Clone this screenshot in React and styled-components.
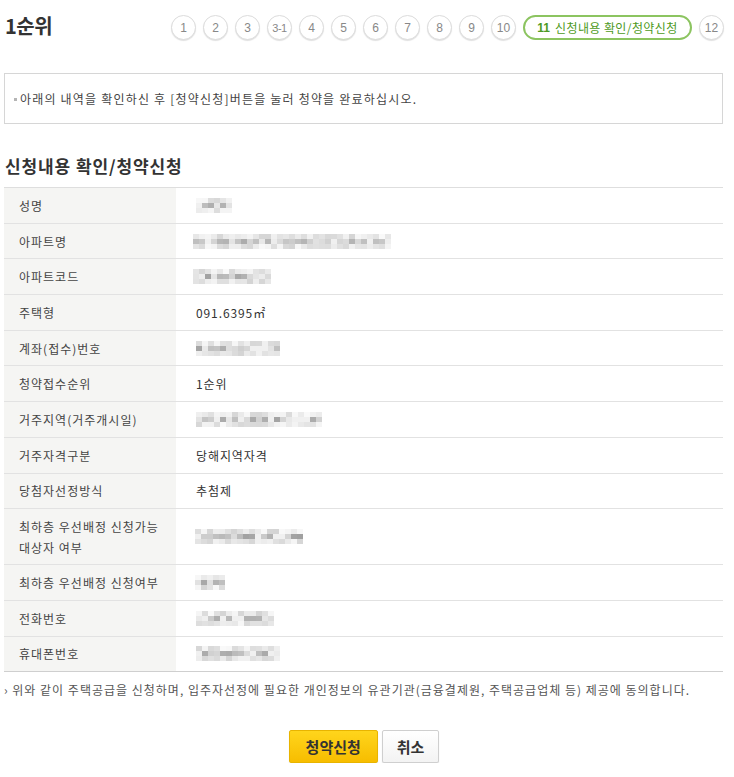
import React from "react";
import styled, { createGlobalStyle } from "styled-components";

const Global = createGlobalStyle`
  html, body { margin: 0; padding: 0; background: #fff; }
  body { font-family: "Noto Sans CJK KR", "Noto Sans", "Liberation Sans", sans-serif; color: #333; }
`;

const Page = styled.div`
  width: 719px;
  padding: 0 11px 0 4px;
`;

const Header = styled.div`
  display: flex;
  align-items: center;
  justify-content: space-between;
  padding-top: 15px;
  height: 25px;
`;

const Title = styled.h1`
  margin: 0;
  font-size: 20px;
  font-weight: 700;
  line-height: 25px;
  color: #333;
  letter-spacing: -0.5px;
  padding-left: 1px;
  margin-top: -4px;
`;

const Steps = styled.div`
  display: flex;
  gap: 7px;
  margin-right: -1px;
`;

const Step = styled.span`
  box-sizing: border-box;
  height: 25px;
  min-width: 25px;
  padding: ${(p) => (p.$active ? "0 12px" : "0")};
  width: ${(p) => (p.$active ? "169px" : "25px")};
  border-radius: 13px;
  border: ${(p) => (p.$active ? "2px solid #8cc460" : "1px solid #dcdcdc")};
  box-shadow: ${(p) => (p.$active ? "none" : "0 1px 1px rgba(0,0,0,0.12)")};
  background: #fff;
  display: flex;
  align-items: center;
  justify-content: center;
  font-family: "Liberation Sans", "Noto Sans CJK KR", sans-serif;
  font-size: ${(p) => (p.$small ? "11px" : "12px")};
  letter-spacing: ${(p) => (p.$small ? "-0.5px" : "0")};
  color: ${(p) => (p.$active ? "#4e9a23" : "#888")};
  white-space: nowrap;
`;

const StepNum = styled.b`
  font-weight: 700;
  margin-right: 5px;
`;

const StepLabel = styled.span`
  font-family: "Noto Sans CJK KR", sans-serif;
  font-size: 12px;
  letter-spacing: 0.4px;
`;

const InfoBox = styled.div`
  margin-top: 33px;
  height: 49px;
  border: 1px solid #d6d6d6;
  display: flex;
  align-items: center;
  padding-left: 9px;
  font-size: 12px;
  color: #444;
  letter-spacing: 1.2px;
`;

const Bullet = styled.span`
  width: 3px;
  height: 3px;
  background: #b5b5b5;
  margin-right: 3px;
  margin-top: 1px;
`;

const SectionTitle = styled.h2`
  margin: 31px 0 0 1px;
  font-size: 17px;
  font-weight: 700;
  line-height: 22px;
  color: #333;
  letter-spacing: 0.9px;
`;

const Table = styled.table`
  margin-top: 10px;
  width: 719px;
  border-collapse: collapse;
  border-top: 1px solid #dedede;
  border-bottom: 1px solid #cfcfcf;
`;

const Row = styled.tr`
  height: ${(p) => (p.$tall ? "56px" : "35.7px")};
  border-bottom: 1px solid #e2e2e2;
  &:last-child { border-bottom: none; }
`;

const Label = styled.th`
  width: 172px;
  box-sizing: border-box;
  background: #f5f5f3;
  text-align: left;
  font-weight: 400;
  font-size: 12px;
  line-height: 21px;
  color: #444;
  padding: 0 6px 0 15px;
  letter-spacing: 1px;
`;

const Value = styled.td`
  font-size: 12px;
  color: #333;
  padding: 0 0 0 20px;
  letter-spacing: 0.9px;
`;

const BlurSvg = styled.svg`
  display: block;
  margin-left: ${(p) => p.$offset || 0}px;
`;

const Notice = styled.p`
  margin: 10px 0 0 0;
  font-size: 12px;
  color: #555;
  letter-spacing: 1px;
  line-height: 16px;
  white-space: nowrap;
`;

const Buttons = styled.div`
  display: flex;
  justify-content: center;
  gap: 4px;
  margin-top: 32px;
  padding-left: 1px;
`;

const Button = styled.button`
  box-sizing: border-box;
  height: 33px;
  padding: 0 ${(p) => (p.$primary ? "16px" : "14px")};
  font-family: "Noto Sans CJK KR", sans-serif;
  font-size: 15px;
  font-weight: 700;
  color: #333;
  border-radius: 2px;
  border: 1px solid ${(p) => (p.$primary ? "#e8b400" : "#cfcfcf")};
  background: ${(p) =>
    p.$primary
      ? "linear-gradient(#ffd51c, #f7bd00)"
      : "linear-gradient(#ffffff, #f3f3f3)"};
  box-shadow: 0 1px 1px rgba(0,0,0,0.15);
  cursor: pointer;
`;

function hash(n) {
  const x = Math.sin(n * 12.9898) * 43758.5453;
  return x - Math.floor(x);
}

function Blur({ w, seed, offset }) {
  const cell = 6;
  const cols = Math.ceil(w / cell);
  const rects = [];
  for (let r = 0; r < 3; r++) {
    for (let c = 0; c < cols; c++) {
      const h = hash(seed * 101 + r * 37 + c * 7.3);
      let g;
      if (r === 1) g = 160 + Math.floor(h * 80);
      else g = 212 + Math.floor(h * 38);
      if (hash(seed + c * 3.1) > 0.85 && r === 1) g = 240;
      rects.push(
        <rect key={r + "-" + c} x={c * cell} y={r * 5} width={cell} height={5} fill={`rgb(${g},${g},${g})`} />
      );
    }
  }
  return (
    <BlurSvg $offset={offset} width={cols * cell} height={15} viewBox={`0 0 ${cols * cell} 15`}>
      {rects}
    </BlurSvg>
  );
}

const rows = [
  { label: "성명", blur: { w: 36, seed: 1, offset: 0 } },
  { label: "아파트명", blur: { w: 196, seed: 2, offset: -3 } },
  { label: "아파트코드", blur: { w: 78, seed: 3, offset: -3 } },
  { label: "주택형", text: "091.6395㎡" },
  { label: "계좌(접수)번호", blur: { w: 80, seed: 5, offset: 0 } },
  { label: "청약접수순위", text: "1순위" },
  { label: "거주지역(거주개시일)", blur: { w: 126, seed: 7, offset: 0 } },
  { label: "거주자격구분", text: "당해지역자격" },
  { label: "당첨자선정방식", text: "추첨제" },
  { label: "최하층 우선배정 신청가능\n대상자 여부", blur: { w: 108, seed: 10, offset: -1 }, tall: true },
  { label: "최하층 우선배정 신청여부", blur: { w: 28, seed: 11, offset: -1 } },
  { label: "전화번호", blur: { w: 78, seed: 12, offset: 0 } },
  { label: "휴대폰번호", blur: { w: 84, seed: 13, offset: 0 } },
];

const steps = ["1", "2", "3", "3-1", "4", "5", "6", "7", "8", "9", "10"];

export default function App() {
  return (
    <Page>
      <Global />
      <Header>
        <Title>1순위</Title>
        <Steps>
          {steps.map((s) => (
            <Step key={s} $small={s === "3-1"}>{s}</Step>
          ))}
          <Step $active>
            <StepNum>11</StepNum>
            <StepLabel>신청내용 확인/청약신청</StepLabel>
          </Step>
          <Step>12</Step>
        </Steps>
      </Header>
      <InfoBox>
        <Bullet />
        아래의 내역을 확인하신 후 [청약신청]버튼을 눌러 청약을 완료하십시오.
      </InfoBox>
      <SectionTitle>신청내용 확인/청약신청</SectionTitle>
      <Table>
        <tbody>
          {rows.map((r) => (
            <Row key={r.label} $tall={r.tall}>
              <Label>
                {r.label.split("\n").map((l, i) => (
                  <React.Fragment key={i}>
                    {i > 0 && <br />}
                    {l}
                  </React.Fragment>
                ))}
              </Label>
              <Value>{r.text ? r.text : <Blur {...r.blur} />}</Value>
            </Row>
          ))}
        </tbody>
      </Table>
      <Notice>
        › 위와 같이 주택공급을 신청하며, 입주자선정에 필요한 개인정보의 유관기관(금융결제원, 주택공급업체 등) 제공에 동의합니다.
      </Notice>
      <Buttons>
        <Button $primary>청약신청</Button>
        <Button>취소</Button>
      </Buttons>
    </Page>
  );
}
